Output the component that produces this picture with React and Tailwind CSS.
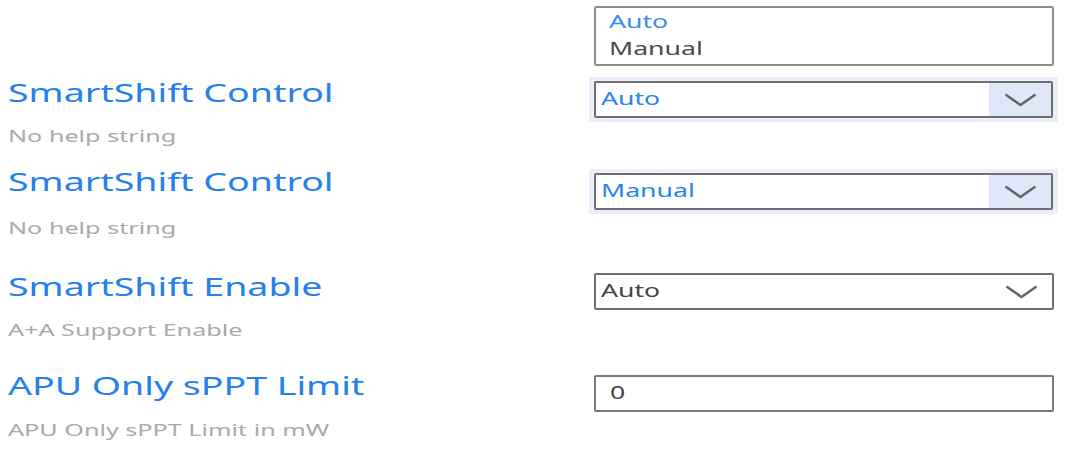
import React from "react";

const Wide = ({ children, className = "" }) => (
  <span className={`inline-block origin-left whitespace-nowrap ${className}`}>{children}</span>
);

const Chevron = () => (
  <svg width="33" height="14" viewBox="0 0 33 14" fill="none">
    <path d="M1.5 1.5 L16.5 12 L31.5 1.5" stroke="#646464" strokeWidth="2.5" strokeLinejoin="round" />
  </svg>
);

const Select = ({ value, focused }) => (
  <div className={`flex w-[469px] ${focused ? "bg-[#e9eef9] px-[5px] py-[4px]" : "pl-[5px]"}`}>
    <div className="flex h-[37px] w-[460px] items-stretch rounded-[2px] border-2 border-[#6f6f6f] bg-white">
      <div
        className={`flex flex-1 items-center pb-[3px] pl-[5px] text-[18px] leading-[24px] ${
          focused ? "text-[#2a83ee]" : "text-[#444444]"
        }`}
      >
        <Wide className="scale-x-[1.48]">{value}</Wide>
      </div>
      <div className={`flex w-[62px] items-center justify-center ${focused ? "bg-[#dfe7f8]" : ""}`}>
        <Chevron />
      </div>
    </div>
  </div>
);

const Setting = ({ title, help, helpGap, controlGap = "", className = "", children }) => (
  <div className={`flex ${className}`}>
    <div className="w-[589px] pl-2">
      <div className="h-[30px] text-[25px] leading-[30px] text-[#2680ec]">
        <Wide className="scale-x-150">{title}</Wide>
      </div>
      <div className={`h-[24px] text-[17px] leading-[24px] text-[#a9a9a9] ${helpGap}`}>
        <Wide className="scale-x-[1.48]">{help}</Wide>
      </div>
    </div>
    <div className={controlGap}>{children}</div>
  </div>
);

export default function App() {
  return (
    <div className="h-[454px] w-[1065px] overflow-hidden bg-white font-['Noto_Sans',sans-serif]">
      {/* open option list */}
      <div className="flex pt-[6px]">
        <div className="w-[594px]" />
        <div className="h-[60px] w-[460px] rounded-[2px] border-2 border-[#8d8d8d] bg-white pl-[13px] text-[18px] leading-[26.5px]">
          <div className="text-[#3a8cf0]">
            <Wide className="scale-x-[1.48]">Auto</Wide>
          </div>
          <div className="text-[#4a4a4a]">
            <Wide className="scale-x-[1.48]">Manual</Wide>
          </div>
        </div>
      </div>

      <Setting title="SmartShift Control" help="No help string" helpGap="mt-[17px]" className="mt-[11px]">
        <Select value="Auto" focused />
      </Setting>

      <Setting
        title="SmartShift Control"
        help="No help string"
        helpGap="mt-[20px]"
        controlGap="mt-[3px]"
        className="mt-[18px]"
      >
        <Select value="Manual" focused />
      </Setting>

      <Setting
        title="SmartShift Enable"
        help="A+A Support Enable"
        helpGap="mt-[17px]"
        controlGap="mt-[2px]"
        className="mt-[31px]"
      >
        <Select value="Auto" />
      </Setting>

      <Setting
        title="APU Only sPPT Limit"
        help="APU Only sPPT Limit in mW"
        helpGap="mt-[18px]"
        controlGap="mt-[5px]"
        className="mt-[28px]"
      >
        <div className="pl-[5px]">
          <div className="flex h-[37px] w-[460px] items-center rounded-[2px] border-2 border-[#7a7a7a] bg-white pb-[3px] pl-[14px] text-[18px] leading-[24px] text-[#444444]">
            <Wide className="scale-x-[1.48]">0</Wide>
          </div>
        </div>
      </Setting>
    </div>
  );
}
